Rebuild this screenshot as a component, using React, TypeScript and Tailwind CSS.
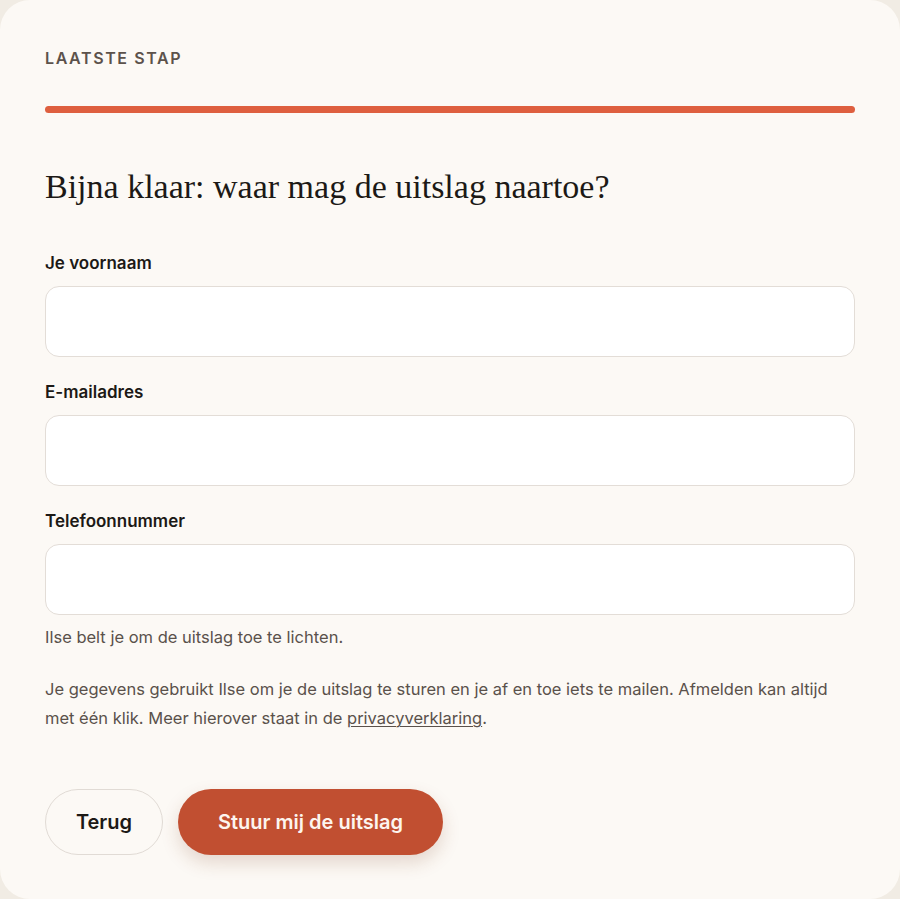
import React from "react";

const sans = "font-['Inter','Noto_Sans',sans-serif]";

function Field({ label, type }: { label: string; type: string }) {
  return (
    <div className="flex flex-col">
      <label className="text-[17px] font-semibold leading-[24px] text-[#1c1916]">{label}</label>
      <input
        type={type}
        className="mt-[11px] h-[71px] w-full rounded-[14px] border border-[#e3ddd7] bg-white px-5 text-[17px] outline-none"
      />
    </div>
  );
}

export default function App() {
  return (
    <div className={`min-h-screen bg-[#f1ece4] ${sans}`}>
      <div className="flex min-h-[899px] flex-col rounded-[30px] bg-[#fcf9f5] px-[45px] pt-[48px]">
        <p className="text-[16px] font-semibold uppercase leading-[20px] tracking-[0.1em] text-[#5c524b]">
          Laatste stap
        </p>
        <div className="mt-[38px] h-[7px] w-full rounded-full bg-[#de5f3f]" />

        <h1 className="mt-[54px] font-['Liberation_Serif',serif] text-[34px] leading-[40px] text-[#1c1916]">
          Bijna klaar: waar mag de uitslag naartoe?
        </h1>

        <div className="mt-[44px] flex flex-col gap-[23px]">
          <Field label="Je voornaam" type="text" />
          <Field label="E-mailadres" type="email" />
          <Field label="Telefoonnummer" type="tel" />
        </div>

        <p className="mt-[9px] text-[16.5px] leading-[26px] text-[#5a514b]">
          Ilse belt je om de uitslag toe te lichten.
        </p>

        <p className="mt-[25px] text-[16.5px] leading-[29px] text-[#5a514b]">
          Je gegevens gebruikt Ilse om je de uitslag te sturen en je af en toe iets te mailen. Afmelden kan altijd
          met één klik. Meer hierover staat in de{" "}
          <span className="underline decoration-1 underline-offset-2">privacyverklaring</span>.
        </p>

        <div className="mt-[56px] flex items-center gap-[15px]">
          <button className="h-[66px] w-[118px] rounded-full border border-[#e1dbd5] bg-[#fcf9f5] text-[20px] font-semibold text-[#1c1916]">
            Terug
          </button>
          <button className="h-[66px] w-[265px] rounded-full bg-[#c14f31] text-[20px] font-semibold text-[#fdf5ef] shadow-[0_8px_18px_rgba(120,60,30,0.18)]">
            Stuur mij de uitslag
          </button>
        </div>
      </div>
    </div>
  );
}
